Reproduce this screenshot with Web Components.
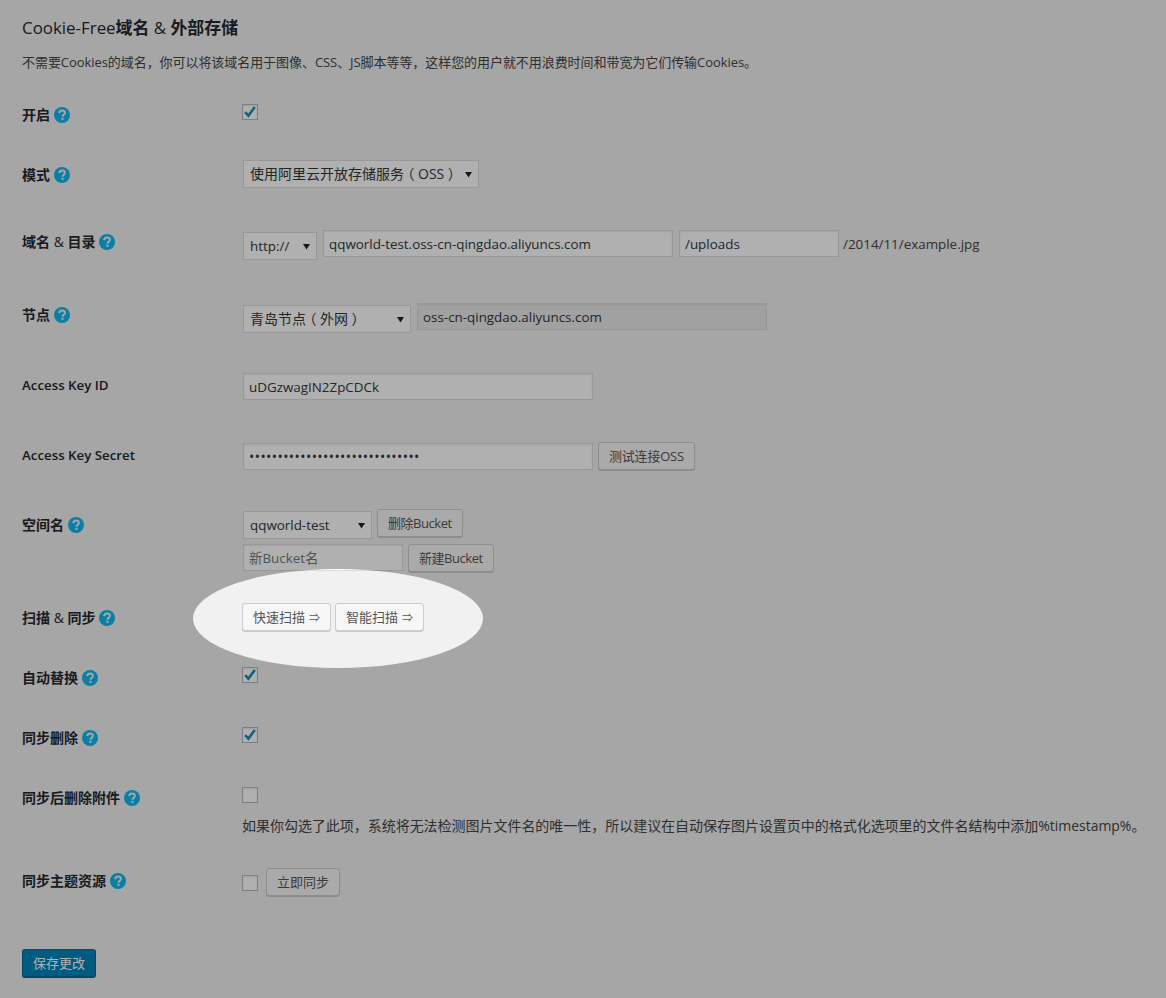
<!DOCTYPE html>
<html lang="zh-CN">
<head>
<meta charset="utf-8">
<title>Cookie-Free域名 & 外部存储</title>
<style>
  html, body { margin: 0; padding: 0; background: #f1f1f1; }
  body { font-family: "Open Sans", "Noto Sans CJK SC", sans-serif; font-size: 13px; color: #444; }
  .paren { margin: 0 3.5px; font-feature-settings: "halt"; }
  .arrow { margin-left: .6px; font-size: 11px; }
</style>
</head>
<body>
<spot-page>
  <section-head>不需要Cookies的域名，你可以将该域名用于图像、CSS、JS脚本等等，这样您的用户就不用浪费时间和带宽为它们传输Cookies。</section-head>

  <opt-row label="开启" help height="60" pad="19"><opt-check checked></opt-check></opt-row>

  <opt-row label="模式" help height="67" pad="14"><opt-select width="236" cjk>使用阿里云开放存储服务<span class="paren">（</span>OSS<span class="paren">）</span></opt-select></opt-row>

  <opt-row label="域名 &amp; 目录" help height="73" pad="18">
    <opt-line>
      <opt-select width="74" drop>http://</opt-select>
      <opt-field width="350">qqworld-test.oss-cn-qingdao.aliyuncs.com</opt-field>
      <opt-field width="160">/uploads</opt-field>
      <span>/2014/11/example.jpg</span>
    </opt-line>
  </opt-row>

  <opt-row label="节点" help height="70" pad="18">
    <opt-line>
      <opt-select width="168" drop cjk>青岛节点<span class="paren">（</span>外网<span class="paren">）</span></opt-select>
      <opt-field width="350" disabled>oss-cn-qingdao.aliyuncs.com</opt-field>
    </opt-line>
  </opt-row>

  <opt-row label="Access Key ID" latin height="70" pad="18"><opt-field width="350">uDGzwagIN2ZpCDCk</opt-field></opt-row>

  <opt-row label="Access Key Secret" latin height="70" pad="17">
    <opt-line>
      <opt-field width="350" drop dots>••••••••••••••••••••••••••••••</opt-field>
      <opt-button style="letter-spacing: -.2px">测试连接OSS</opt-button>
    </opt-line>
  </opt-row>

  <opt-row label="空间名" help height="93" pad="14">
    <opt-line>
      <opt-select width="129" drop>qqworld-test</opt-select>
      <opt-button style="letter-spacing: -.45px">删除Bucket</opt-button>
    </opt-line>
    <opt-line gap>
      <opt-field width="160" placeholder>新Bucket名</opt-field>
      <opt-button style="letter-spacing: -.45px">新建Bucket</opt-button>
    </opt-line>
  </opt-row>

  <opt-row label="扫描 &amp; 同步" help height="60" pad="15">
    <opt-line>
      <opt-button>快速扫描 <span class="arrow">⇒</span></opt-button>
      <opt-button>智能扫描 <span class="arrow">⇒</span></opt-button>
    </opt-line>
  </opt-row>

  <opt-row label="自动替换" help height="60" pad="19"><opt-check checked></opt-check></opt-row>

  <opt-row label="同步删除" help height="60" pad="19"><opt-check checked></opt-check></opt-row>

  <opt-row label="同步后删除附件" help height="83" pad="19">
    <opt-check></opt-check>
    <opt-note>如果你勾选了此项，系统将无法检测图片文件名的唯一性，所以建议在自动保存图片设置页中的格式化选项里的文件名结构中添加%timestamp%。</opt-note>
  </opt-row>

  <opt-row label="同步主题资源" help height="98" pad="17">
    <opt-line>
      <opt-check spaced></opt-check>
      <opt-button>立即同步</opt-button>
    </opt-line>
  </opt-row>

  <opt-button primary>保存更改</opt-button>
</spot-page>

<script>
class SpotPage extends HTMLElement {
  connectedCallback() {
    this.attachShadow({ mode: "open" });
    this.shadowRoot.innerHTML = `
      <style>
        :host {
          position: relative;
          display: block;
          box-sizing: border-box;
          height: 998px;
          padding: 17px 0 0 22px;
          overflow: hidden;
        }
        .spot {
          position: absolute;
          left: 193px;
          top: 569px;
          width: 290px;
          height: 99px;
          border-radius: 50%;
          box-shadow: 0 0 0 1400px rgba(0, 0, 0, .31);
          pointer-events: none;
        }
      </style>
      <slot></slot>
      <div class="spot"></div>
    `;
  }
}

class SectionHead extends HTMLElement {
  connectedCallback() {
    this.attachShadow({ mode: "open" });
    this.shadowRoot.innerHTML = `
      <style>
        :host { display: block; height: 68px; }
        h2 {
          margin: 0 0 13px;
          font-size: 16.9px;
          line-height: 22px;
          font-weight: 400;
          color: #23282d;
        }
        h2 b { font-weight: 600; }
        p { margin: 0; line-height: 20px; font-size: 13px; letter-spacing: -.06px; white-space: nowrap; }
      </style>
      <h2>Cookie-Free<b>域名</b> &amp; <b>外部存储</b></h2>
      <p><slot></slot></p>
    `;
  }
}

class OptRow extends HTMLElement {
  connectedCallback() {
    this.attachShadow({ mode: "open" });
    const helpIcon = this.hasAttribute("help") ? "<help-icon></help-icon>" : "";
    const labelHtml = this.getAttribute("label").replace("&", '<span class="amp">&amp;</span>');
    this.shadowRoot.innerHTML = `
      <style>
        :host {
          display: grid;
          grid-template-columns: 220px 1fr;
          height: ${this.getAttribute("height")}px;
        }
        .label {
          display: flex;
          align-items: center;
          gap: 4px;
          height: 20px;
          padding-top: 19px;
          font-size: 14px;
          font-weight: 600;
          color: #23282d;
          white-space: nowrap;
        }
        :host([latin]) .label { padding-top: 20px; font-size: 13.3px; }
        .amp { font-weight: 400; }
        .body { padding-top: ${this.getAttribute("pad")}px; }
      </style>
      <div class="label"><span>${labelHtml}</span>${helpIcon}</div>
      <div class="body"><slot></slot></div>
    `;
  }
}

class OptLine extends HTMLElement {
  connectedCallback() {
    this.attachShadow({ mode: "open" });
    this.shadowRoot.innerHTML = `
      <style>
        :host {
          display: flex;
          align-items: flex-start;
          gap: 4px;
          line-height: 28px;
          white-space: nowrap;
        }
        :host([gap]) { margin-top: 5px; }
        ::slotted(span) { margin-left: -1px; font-size: 13.4px; }
      </style>
      <slot></slot>
    `;
  }
}

class HelpIcon extends HTMLElement {
  connectedCallback() {
    this.attachShadow({ mode: "open" });
    this.shadowRoot.innerHTML = `
      <style>
        :host { display: inline-flex; width: 16px; height: 16px; margin-top: 2px; }
        svg { display: block; }
      </style>
      <svg width="16" height="16" viewBox="0 0 16 16" aria-hidden="true">
        <circle cx="8" cy="8" r="8" fill="#0fb8f0"/>
        <path d="M5.2 6.1C5.3 4.4 6.5 3.4 8.1 3.4c1.7 0 2.8 1 2.8 2.4 0 1-.5 1.5-1.3 2.1-.8.6-1.1 1-1.1 1.9" fill="none" stroke="#f1f1f1" stroke-width="2"/>
        <rect x="7.4" y="10.8" width="2.1" height="2.1" fill="#f1f1f1"/>
      </svg>
    `;
  }
}

class OptCheck extends HTMLElement {
  connectedCallback() {
    this.attachShadow({ mode: "open" });
    const tick = this.hasAttribute("checked")
      ? `<svg width="14" height="14" viewBox="0 0 14 14" aria-hidden="true"><path d="M2.2 7.2 5.4 10.6 11.8 1.9" fill="none" stroke="#1e8cbe" stroke-width="2.6"/></svg>`
      : "";
    this.shadowRoot.innerHTML = `
      <style>
        :host {
          display: block;
          box-sizing: border-box;
          width: 16px;
          height: 16px;
          border: 1px solid #b4b9be;
          background: #fff;
          box-shadow: inset 0 1px 2px rgba(0, 0, 0, .1);
        }
        :host([spaced]) { margin: 7px 4px 0 0; }
        svg { display: block; }
      </style>
      ${tick}
    `;
  }
}

class OptSelect extends HTMLElement {
  connectedCallback() {
    this.attachShadow({ mode: "open" });
    this.shadowRoot.innerHTML = `
      <style>
        :host {
          display: flex;
          align-items: center;
          justify-content: space-between;
          box-sizing: border-box;
          width: ${this.getAttribute("width")}px;
          height: 28px;
          margin: 1px 1px 0;
          padding: 0 6px;
          border: 1px solid #ddd;
          background: #fff;
          color: #32373c;
          font-size: 13.4px;
          line-height: 26px;
          white-space: nowrap;
        }
        :host([cjk]) { font-size: 14px; }
        :host([drop]) { margin-top: 2px; }
        svg { display: block; flex-shrink: 0; }
      </style>
      <span><slot></slot></span>
      <svg width="7" height="7" viewBox="0 0 7 7" aria-hidden="true"><path d="M0 1h7L3.5 6.5z" fill="#222"/></svg>
    `;
  }
}

class OptField extends HTMLElement {
  connectedCallback() {
    this.attachShadow({ mode: "open" });
    this.shadowRoot.innerHTML = `
      <style>
        :host {
          display: block;
          box-sizing: border-box;
          width: ${this.getAttribute("width")}px;
          height: 27px;
          margin: 0 1px;
          padding: 0 5px;
          border: 1px solid #ddd;
          background: #fff;
          box-shadow: inset 0 1px 2px rgba(0, 0, 0, .07);
          color: #32373c;
          font-size: 13.4px;
          line-height: 26px;
          white-space: nowrap;
          overflow: hidden;
        }
        :host([drop]) { margin-top: 1px; }
        :host([disabled]) { background: #e9e9e9; border-color: #dcdcdc; }
        :host([placeholder]) { color: #72777c; }
        :host([dots]) { letter-spacing: .43px; font-size: 14px; }
      </style>
      <slot></slot>
    `;
  }
}

class OptButton extends HTMLElement {
  connectedCallback() {
    this.attachShadow({ mode: "open" });
    this.shadowRoot.innerHTML = `
      <style>
        :host {
          display: inline-block;
          box-sizing: border-box;
          height: 28px;
          padding: 0 10px;
          border: 1px solid #ccc;
          border-radius: 3px;
          background: #f7f7f7;
          box-shadow: 0 1px 0 #ccc;
          color: #555;
          font-size: 13px;
          line-height: 26px;
          white-space: nowrap;
        }
        :host([primary]) {
          width: 74px;
          border-color: #0073aa #006799 #006799;
          background: #0085ba;
          box-shadow: 0 1px 0 #006799;
          color: #fff;
        }
      </style>
      <slot></slot>
    `;
  }
}

class OptNote extends HTMLElement {
  connectedCallback() {
    this.attachShadow({ mode: "open" });
    this.shadowRoot.innerHTML = `
      <style>
        :host {
          display: block;
          margin-top: 13px;
          font-size: 14px;
          letter-spacing: -.03px;
          line-height: 20px;
          white-space: nowrap;
        }
      </style>
      <slot></slot>
    `;
  }
}

customElements.define("spot-page", SpotPage);
customElements.define("section-head", SectionHead);
customElements.define("opt-row", OptRow);
customElements.define("opt-line", OptLine);
customElements.define("help-icon", HelpIcon);
customElements.define("opt-check", OptCheck);
customElements.define("opt-select", OptSelect);
customElements.define("opt-field", OptField);
customElements.define("opt-button", OptButton);
customElements.define("opt-note", OptNote);
</script>
</body>
</html>
